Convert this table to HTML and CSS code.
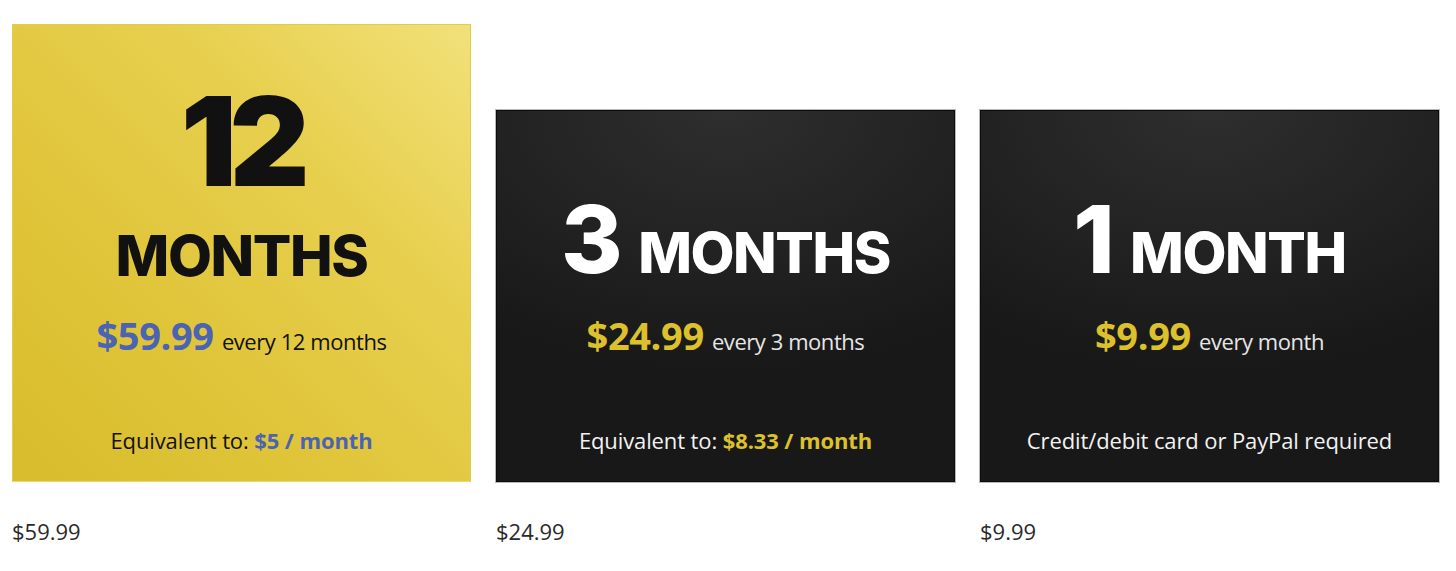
FILE: index.html
```html
<!DOCTYPE html>
<html lang="en">
<head>
<meta charset="utf-8">
<title>Subscription plans</title>
<link rel="stylesheet" href="styles.css">
</head>
<body>
<main class="plans">
  <article class="plan">
    <div class="card card-gold">
      <div class="title title-stacked">
        <span class="num num-big">12</span>
        <span class="unit">MONTHS</span>
      </div>
      <p class="price price-stacked"><strong class="amount">$59.99</strong> <span class="period">every 12 months</span></p>
      <p class="note">Equivalent to: <strong class="amount-small">$5 / month</strong></p>
    </div>
    <p class="label">$59.99</p>
  </article>
  <article class="plan">
    <div class="card card-dark">
      <div class="title">
        <span class="num">3</span>
        <span class="unit">MONTHS</span>
      </div>
      <p class="price"><strong class="amount">$24.99</strong> <span class="period">every 3 months</span></p>
      <p class="note">Equivalent to: <strong class="amount-small">$8.33 / month</strong></p>
    </div>
    <p class="label">$24.99</p>
  </article>
  <article class="plan">
    <div class="card card-dark">
      <div class="title">
        <span class="num">1</span>
        <span class="unit">MONTH</span>
      </div>
      <p class="price"><strong class="amount">$9.99</strong> <span class="period">every month</span></p>
      <p class="note">Credit/debit card or PayPal required</p>
    </div>
    <p class="label">$9.99</p>
  </article>
</main>
</body>
</html>
```
FILE: styles.css
```css
html, body {
  margin: 0;
  padding: 0;
  background: #ffffff;
}

body {
  font-family: "Open Sans", "Noto Sans", sans-serif;
}

.plans {
  display: grid;
  grid-template-columns: repeat(3, 459px);
  column-gap: 25px;
  align-items: end;
  padding: 24px 0 0 12px;
}

.plan {
  display: flex;
  flex-direction: column;
}

.card {
  box-sizing: border-box;
  display: flex;
  flex-direction: column;
  align-items: center;
  justify-content: flex-end;
  padding-bottom: 26px;
  text-align: center;
}

.card-gold {
  height: 458px;
  color: #111;
  background: linear-gradient(225deg, #f1e17a 0%, #e8d050 30%, #e0c53a 65%, #d8bc2c 100%);
  border: 1px solid #e4cc48;
  border-bottom-color: #ecd870;
}

.card-dark {
  height: 372px;
  color: #f2f2f2;
  background: radial-gradient(ellipse 90% 70% at 50% 0%, #2e2e2e 0%, #222 55%, #181818 100%);
  border: 1px solid #0c0c0c;
  box-shadow: 0 0 0 1px #b8b8b8;
}

.title {
  display: flex;
  align-items: baseline;
  justify-content: center;
  font-family: "Inter", "Lato", sans-serif;
  font-weight: 800;
  height: 100px;
  line-height: 100px;
  margin-bottom: 24px;
}

.card-dark .title {
  color: #fff;
}

.title .num {
  font-size: 94px;
  letter-spacing: -0.05em;
  margin-right: 20px;
}

.title .unit {
  font-size: 57px;
  letter-spacing: -0.025em;
}

.title-stacked {
  flex-direction: column;
  align-items: center;
  height: auto;
  line-height: normal;
  margin-bottom: 28px;
}

.title-stacked .num-big {
  font-size: 124px;
  font-weight: 900;
  line-height: 110px;
  margin-right: 0;
  margin-bottom: 31px;
  letter-spacing: -0.06em;
}

.title-stacked .unit {
  line-height: 58px;
}

.price {
  margin: 0 0 59px;
  line-height: 44px;
}

.price .amount {
  font-size: 38px;
  font-weight: 700;
  letter-spacing: -0.01em;
}

.card-gold .amount,
.card-gold .amount-small {
  color: #4b63b3;
}

.card-dark .amount,
.card-dark .amount-small {
  color: #dcc12c;
}

.price .period {
  font-size: 22px;
  margin-left: 4px;
  letter-spacing: -0.02em;
}

.card-dark .period {
  color: #e6e6e6;
}

.note {
  margin: 0;
  font-size: 22px;
  line-height: 30px;
  letter-spacing: -0.005em;
}

.note .amount-small {
  font-weight: 700;
}

.label {
  margin: 35px 0 0;
  font-size: 22px;
  line-height: 28px;
  color: #2a2a2a;
}
```
